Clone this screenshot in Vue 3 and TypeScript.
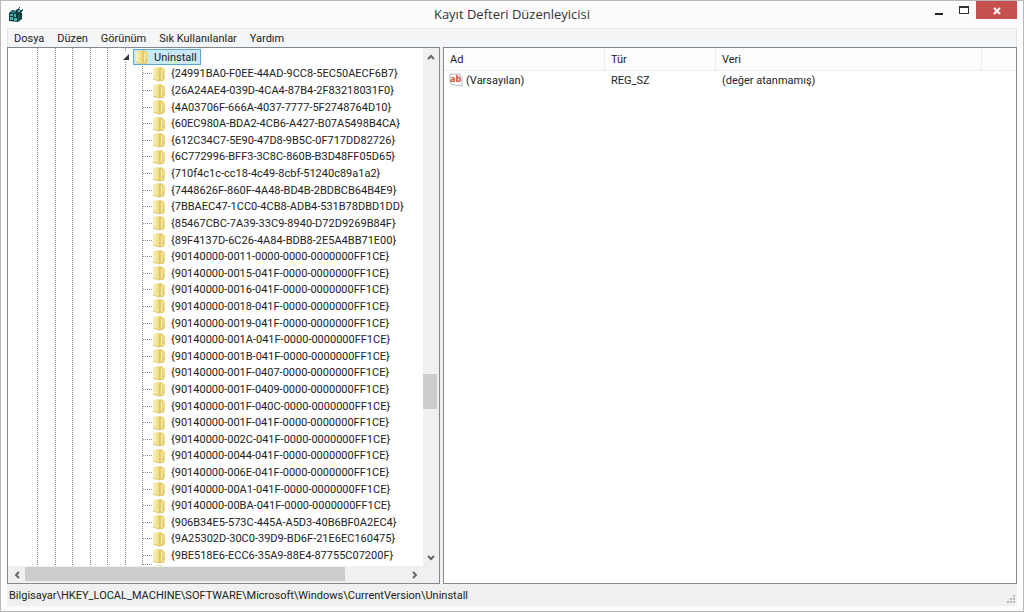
<script setup lang="ts">
import { ref } from 'vue'

interface RegistryValue {
  name: string
  type: string
  data: string
}

const title = 'Kayıt Defteri Düzenleyicisi'
const menus = ['Dosya', 'Düzen', 'Görünüm', 'Sık Kullanılanlar', 'Yardım']
const root = 'Uninstall'
const selected = ref(root)
const keys: string[] = [
  '{24991BA0-F0EE-44AD-9CC8-5EC50AECF6B7}',
  '{26A24AE4-039D-4CA4-87B4-2F83218031F0}',
  '{4A03706F-666A-4037-7777-5F2748764D10}',
  '{60EC980A-BDA2-4CB6-A427-B07A5498B4CA}',
  '{612C34C7-5E90-47D8-9B5C-0F717DD82726}',
  '{6C772996-BFF3-3C8C-860B-B3D48FF05D65}',
  '{710f4c1c-cc18-4c49-8cbf-51240c89a1a2}',
  '{7448626F-860F-4A48-BD4B-2BDBCB64B4E9}',
  '{7BBAEC47-1CC0-4CB8-ADB4-531B78DBD1DD}',
  '{85467CBC-7A39-33C9-8940-D72D9269B84F}',
  '{89F4137D-6C26-4A84-BDB8-2E5A4BB71E00}',
  '{90140000-0011-0000-0000-0000000FF1CE}',
  '{90140000-0015-041F-0000-0000000FF1CE}',
  '{90140000-0016-041F-0000-0000000FF1CE}',
  '{90140000-0018-041F-0000-0000000FF1CE}',
  '{90140000-0019-041F-0000-0000000FF1CE}',
  '{90140000-001A-041F-0000-0000000FF1CE}',
  '{90140000-001B-041F-0000-0000000FF1CE}',
  '{90140000-001F-0407-0000-0000000FF1CE}',
  '{90140000-001F-0409-0000-0000000FF1CE}',
  '{90140000-001F-040C-0000-0000000FF1CE}',
  '{90140000-001F-041F-0000-0000000FF1CE}',
  '{90140000-002C-041F-0000-0000000FF1CE}',
  '{90140000-0044-041F-0000-0000000FF1CE}',
  '{90140000-006E-041F-0000-0000000FF1CE}',
  '{90140000-00A1-041F-0000-0000000FF1CE}',
  '{90140000-00BA-041F-0000-0000000FF1CE}',
  '{906B34E5-573C-445A-A5D3-40B6BF0A2EC4}',
  '{9A25302D-30C0-39D9-BD6F-21E6EC160475}',
  '{9BE518E6-ECC6-35A9-88E4-87755C07200F}',
]
const values: RegistryValue[] = [
  { name: '(Varsayılan)', type: 'REG_SZ', data: '(değer atanmamış)' },
]
const path = 'Bilgisayar\\HKEY_LOCAL_MACHINE\\SOFTWARE\\Microsoft\\Windows\\CurrentVersion\\Uninstall'
</script>

<template>
  <div class="window">
    <svg class="defs" aria-hidden="true">
      <defs>
        <linearGradient id="leaf" x1="0" x2="1" y1="0" y2="0">
          <stop offset="0" stop-color="#faf2bd" />
          <stop offset="1" stop-color="#ecd978" />
        </linearGradient>
        <linearGradient id="cover" x1="0" x2="1" y1="0" y2="0">
          <stop offset="0" stop-color="#dfc45c" />
          <stop offset="1" stop-color="#f3e190" />
        </linearGradient>
        <symbol id="folder" viewBox="0 0 14 16">
          <path d="M1 3 Q1 2 2 2 L6 1 L8 2 V15 L2 14 Q1 14 1 13 Z" fill="url(#leaf)" />
          <path d="M7 2 L8 1 L11 2 L13 4 V13 L12 14 L7 15 Z" fill="url(#cover)" />
          <path d="M9 3 L10 4 V13 L9 14 Z" fill="#f8ecad" />
          <path d="M1 13 L7 15 L12 14" fill="none" stroke="#dcc871" />
          <path d="M11 11 H12" stroke="#9a9f86" />
        </symbol>
      </defs>
    </svg>

    <header class="titlebar">
      <svg class="app-icon" viewBox="0 0 16 16" aria-hidden="true">
        <path d="M1 6 L4 3 L9 4 L9 6 L14 6 V12 L10 15 L1 14 Z" fill="#0d3b40" />
        <path d="M2 7 H5 V9 H2 Z M6 7 H8 V10 H6 Z M2 10 H5 V13 H2 Z M6 11 H9 V14 H6 Z" fill="#45b3a6" />
        <path d="M3 4 H7 L8 6 H3 Z" fill="#247d7d" />
        <path d="M10 8 H12 V13 L10 14 Z" fill="#16595e" />
        <path d="M8 3 L11 1 L12 3 L15 3 L13 6 L11 7 L8 6 Z" fill="#173e48" />
        <path d="M10 3 H12 V5 H10 Z" fill="#6bb4bb" />
        <path d="M11 0 H12 V1 H11 Z M14 2 H15 V3 H14 Z" fill="#3a5660" />
      </svg>
      <h1>{{ title }}</h1>
      <div class="controls">
        <button type="button" class="control minimize" aria-label="Simge durumuna küçült">
          <svg viewBox="0 0 10 10" aria-hidden="true"><path d="M1 8 H9 V10 H1 Z" fill="#222" /></svg>
        </button>
        <button type="button" class="control maximize" aria-label="Ekranı kapla">
          <svg viewBox="0 0 10 10" aria-hidden="true">
            <path d="M0 1 H10 V9 H0 Z M1 3 V8 H9 V3 Z" fill="#333" fill-rule="evenodd" />
          </svg>
        </button>
        <button type="button" class="control close" aria-label="Kapat">
          <svg viewBox="0 0 10 10" aria-hidden="true"><path d="M2 3 L8 9 M8 3 L2 9" stroke="#fff" stroke-width="2" /></svg>
        </button>
      </div>
    </header>

    <nav class="menubar" aria-label="Menü">
      <button v-for="item in menus" :key="item" type="button">{{ item }}</button>
    </nav>

    <main class="panes">
      <section class="tree-pane" aria-label="Anahtarlar">
        <div class="tree-view">
          <div class="guides" aria-hidden="true">
            <span v-for="n in 7" :key="n" class="guide"></span>
          </div>
          <ul class="tree" role="tree">
            <li class="row root" role="treeitem" aria-expanded="true">
              <button type="button" class="expander" aria-label="Daralt">
                <svg viewBox="0 0 6 6" aria-hidden="true"><path d="M6 0 V6 H0 Z" fill="#333" /></svg>
              </button>
              <span class="stub"></span>
              <button type="button" class="key" :class="{ selected: selected === root }" @click="selected = root">
                <svg class="folder" aria-hidden="true"><use href="#folder" /></svg>
                <span>{{ root }}</span>
              </button>
            </li>
            <li v-for="key in keys" :key="key" class="row child" role="treeitem">
              <span class="branch"></span>
              <button type="button" class="key" :class="{ selected: selected === key }" @click="selected = key">
                <svg class="folder" aria-hidden="true"><use href="#folder" /></svg>
                <span>{{ key }}</span>
              </button>
            </li>
            <li class="row child clipped" aria-hidden="true">
              <span class="branch"></span>
              <svg class="folder"><use href="#folder" /></svg>
            </li>
          </ul>
        </div>
        <div class="vscroll">
          <button type="button" aria-label="Yukarı kaydır">
            <svg viewBox="0 0 8 8" aria-hidden="true"><path d="M1 6 L4 3 L7 6" /></svg>
          </button>
          <div class="track"><div class="thumb"></div></div>
          <button type="button" aria-label="Aşağı kaydır">
            <svg viewBox="0 0 8 8" aria-hidden="true"><path d="M1 2 L4 5 L7 2" /></svg>
          </button>
        </div>
        <div class="hscroll">
          <button type="button" aria-label="Sola kaydır">
            <svg viewBox="0 0 8 8" aria-hidden="true"><path d="M6 1 L3 4 L6 7" /></svg>
          </button>
          <div class="track"><div class="thumb"></div></div>
          <button type="button" aria-label="Sağa kaydır">
            <svg viewBox="0 0 8 8" aria-hidden="true"><path d="M2 1 L5 4 L2 7" /></svg>
          </button>
        </div>
      </section>

      <section class="value-pane" aria-label="Değerler">
        <table>
          <colgroup>
            <col class="col-name" />
            <col class="col-type" />
            <col class="col-data" />
            <col />
          </colgroup>
          <thead>
            <tr>
              <th scope="col">Ad</th>
              <th scope="col">Tür</th>
              <th scope="col">Veri</th>
              <td></td>
            </tr>
          </thead>
          <tbody>
            <tr v-for="value in values" :key="value.name">
              <td>
                <span class="value-name">
                  <svg viewBox="0 0 14 14" aria-hidden="true">
                    <path d="M1 1 H10 L13 4 V13 L10 12 L7 13 L5 11 L3 12 L1 10 Z" fill="#fff" stroke="#b4b8bd" />
                    <path d="M10 1 V4 H13" fill="none" stroke="#c4c7cb" />
                    <text x="1" y="9">ab</text>
                  </svg>
                  <span>{{ value.name }}</span>
                </span>
              </td>
              <td>{{ value.type }}</td>
              <td>{{ value.data }}</td>
              <td></td>
            </tr>
          </tbody>
        </table>
      </section>
    </main>

    <footer class="status">
      <span>{{ path }}</span>
      <svg viewBox="0 0 8 8" aria-hidden="true">
        <path d="M6 0h2v2h-2z M3 3h2v2h-2z M6 3h2v2h-2z M0 6h2v2h-2z M3 6h2v2h-2z M6 6h2v2h-2z" fill="#b8b8b8" />
      </svg>
    </footer>
  </div>
</template>

<style>
body {
  margin: 0;
}
</style>

<style scoped>
.window {
  box-sizing: border-box;
  display: flex;
  flex-direction: column;
  height: 100vh;
  padding: 0 6px 5px;
  border: 1px solid #b9b9bb;
  background: #fcfcfc;
  color: #222;
  font: 11px/17px Roboto, "Open Sans", sans-serif;
}
button {
  margin: 0;
  padding: 0;
  border: 0;
  background: none;
  color: inherit;
  font: inherit;
}
.defs {
  position: absolute;
  width: 0;
  height: 0;
}
.titlebar {
  display: grid;
  grid-template-columns: 1fr auto 1fr;
  flex: none;
  height: 27px;
}
.app-icon {
  width: 16px;
  height: 16px;
  margin: 6px 0 0 1px;
}
h1 {
  margin: 0;
  color: #333;
  font: 400 13px/26px "Open Sans", "Noto Sans", sans-serif;
}
.controls {
  display: flex;
  align-items: flex-start;
  justify-content: flex-end;
}
.control {
  display: grid;
  place-items: center;
  width: 25px;
  height: 18px;
}
.control svg {
  width: 10px;
  height: 10px;
}
.close {
  width: 41px;
  background: #c75050;
}
.menubar {
  display: flex;
  flex: none;
  gap: 13px;
  height: 18px;
  padding: 0 6px;
  border: 1px solid #e4e4e6;
  border-bottom: 0;
  background: #f4f5f7;
}
.panes {
  display: flex;
  flex: 1;
  gap: 3px;
  min-height: 0;
  background: #f0f0f0;
}
.tree-pane,
.value-pane {
  box-sizing: border-box;
  border: 1px solid #828790;
  background: #fff;
}
.tree-pane {
  display: grid;
  grid-template: minmax(0, 1fr) 17px / minmax(0, 1fr) 16px;
  flex: 0 0 433px;
}
.tree-view {
  display: grid;
  overflow: hidden;
}
.guides,
.tree {
  grid-area: 1 / 1;
  min-height: 0;
}
.guides {
  display: flex;
  width: 123px;
  padding-left: 29px;
  box-sizing: content-box;
}
.guide {
  flex: 1;
  background: repeating-linear-gradient(#8c8c8c 0 1px, #fff 1px 2px) no-repeat left / 1px 100%;
}
.guide:last-child {
  margin-top: 16px;
}
.tree {
  display: flex;
  flex-direction: column;
  margin: 0;
  padding: 1px 0 0;
  list-style: none;
}
.row {
  display: flex;
  flex: 1;
  align-items: center;
  min-height: 0;
}
.root {
  padding-left: 114px;
}
.expander {
  display: grid;
  place-items: center;
  width: 8px;
  height: 10px;
  background: #fff;
}
.expander svg {
  width: 6px;
  height: 6px;
}
.stub {
  width: 3px;
}
.child {
  padding-left: 135px;
}
.branch {
  width: 9px;
  height: 1px;
  background: repeating-linear-gradient(90deg, #8c8c8c 0 1px, #fff 1px 2px);
}
.key {
  display: flex;
  align-items: center;
  gap: 5px;
  height: 16px;
  white-space: nowrap;
}
.folder {
  flex: none;
  width: 14px;
  height: 16px;
}
.root .key {
  padding: 0 3px 0 1px;
  border: 1px solid transparent;
}
.key.selected {
  border: 1px solid #58a8cf;
  background: #cbe8f6;
}
.clipped {
  flex: 0 0 2px;
  align-items: flex-start;
  overflow: hidden;
}
.vscroll,
.hscroll {
  display: flex;
  background: #f0f0f0;
}
.vscroll {
  flex-direction: column;
}
.hscroll {
  grid-column: 1 / -1;
  padding-right: 16px;
}
.vscroll button,
.hscroll button {
  display: grid;
  flex: none;
  place-items: center;
  width: 15px;
  height: 17px;
}
.hscroll button {
  width: 17px;
}
.vscroll svg,
.hscroll svg {
  width: 8px;
  height: 8px;
  fill: none;
  stroke: #666;
  stroke-width: 2;
}
.track {
  display: flex;
  flex: 1;
}
.vscroll .track {
  flex-direction: column;
  justify-content: flex-end;
  padding-bottom: 140px;
}
.thumb {
  background: #cdcdcd;
}
.vscroll .thumb {
  height: 35px;
  margin-right: 2px;
}
.hscroll .thumb {
  width: 320px;
  margin: 1px 0 2px;
}
.value-pane {
  flex: 1;
  min-width: 0;
}
table {
  width: 100%;
  border-collapse: separate;
  border-spacing: 0;
  table-layout: fixed;
}
.col-name {
  width: 161px;
}
.col-type {
  width: 111px;
}
.col-data {
  width: 266px;
}
th,
td {
  padding: 0 6px;
  font-weight: 400;
  text-align: left;
  white-space: nowrap;
}
thead th,
thead td {
  height: 22px;
  border-bottom: 1px solid #ececee;
  background: #fdfdfd;
}
thead th {
  border-right: 1px solid #ececee;
}
tbody td {
  height: 18px;
}
tbody td:first-child {
  padding-left: 5px;
}
.value-name {
  display: flex;
  align-items: center;
  gap: 3px;
}
.value-name svg {
  width: 14px;
  height: 14px;
}
.value-name text {
  fill: #d04a2c;
  font: 700 9px "Open Sans", sans-serif;
}
.status {
  display: flex;
  flex: none;
  align-items: center;
  justify-content: space-between;
  height: 22px;
  padding: 0 2px;
  background: #f0f0f0;
}
.status svg {
  align-self: flex-end;
  width: 8px;
  height: 8px;
  margin-bottom: 3px;
}
</style>
